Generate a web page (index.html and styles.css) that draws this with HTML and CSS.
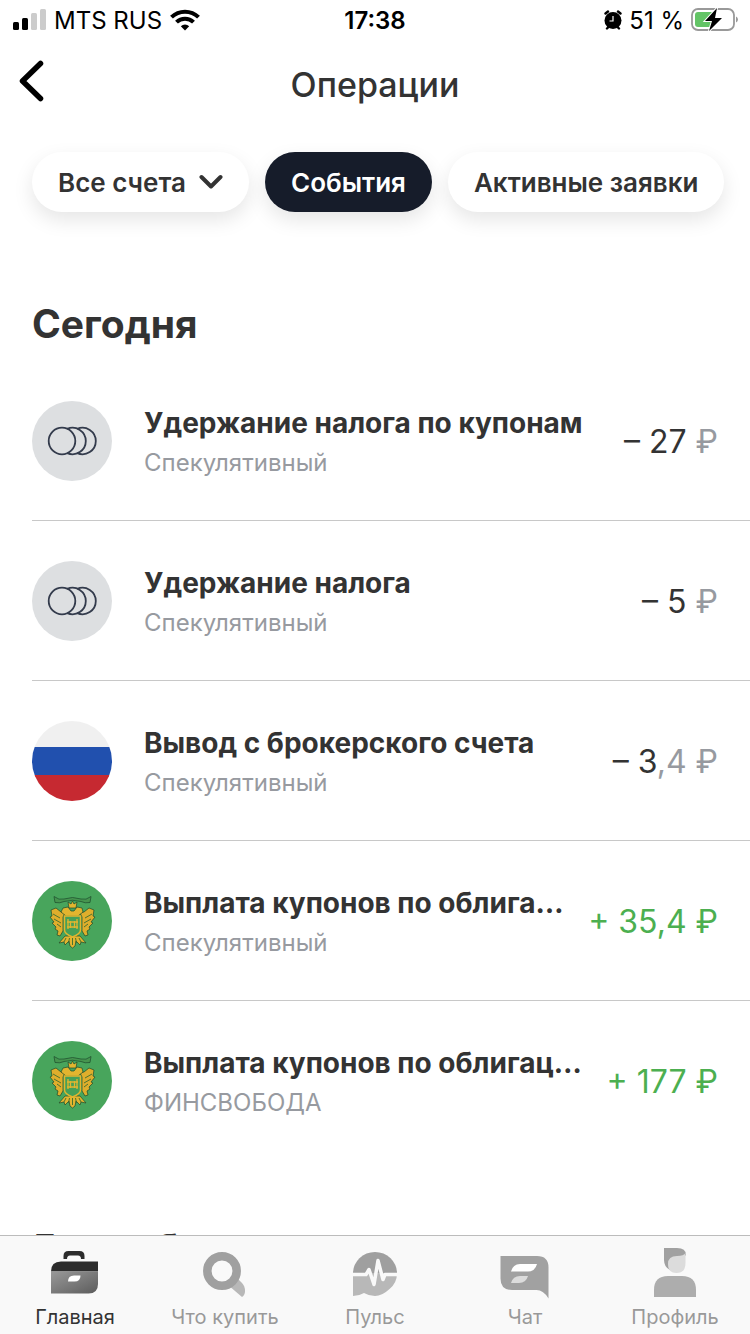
FILE: index.html
```html
<!DOCTYPE html>
<html lang="ru">
<head>
    <meta charset="UTF-8">
    <meta name="viewport" content="width=device-width, initial-scale=1.0">
    <title>Операции</title>
    <link rel="stylesheet" href="styles.css">
</head>
<body>
    <!-- Shared symbols -->
    <svg class="symbols" aria-hidden="true">
        <symbol id="coins" viewBox="0 0 80 80">
            <g fill="none" stroke="#333b4c" stroke-width="1.8">
                <circle cx="30" cy="40" r="13.300"/>
                <path d="M35.200 27.800A13.300 13.300 0 1 1 35.200 52.200"/>
                <path d="M45.200 27.800A13.300 13.300 0 1 1 45.200 52.200"/>
            </g>
        </symbol>
        <symbol id="eagle" viewBox="0 0 80 80">
            <g stroke="#1d4a2c" stroke-width=".7" stroke-linejoin="round">
                <path d="M24 27l5 4 4 1-2 4v14l-3 5-3-1 1-4-3-2 1-2-4-4 2-1-4-5 2-1-1-6z" fill="#dfae2c"/>
                <path d="M57 27l-5 4-4 1 2 4v14l3 5 3-1-1-4 3-2-1-2 4-4-2-1 4-5-2-1 1-6z" fill="#dfae2c"/>
                <path d="M33 55l-6 7 5-1 1 3 4-4 1 5 2.500 2 2.500-2 1-5 4 4 1-3 5 1-6-7z" fill="#e2b52f"/>
                <path d="M31 27l5-1 3 4h3l3-4 5 1 1 4-5 4H34l-5-4z" fill="#e2b52f"/>
                <path d="M37 27l-1-6 3 2 1.500-3 1.500 3 3-2-1 6z" fill="#e2b52f"/>
                <path d="M22 15.500q5 4 10 2.500 8.500-3 17 0 5 1.500 10-2.500l-1 6q-5 1-9-1-8.500-2.500-17 0-4 2-9 1z" fill="#46954f"/>
                <path d="M32.500 35h16v14q0 4-8 7-8-3-8-7z" fill="#45a058" stroke="#e2b52f" stroke-width="1.500"/>
            </g>
            <path d="M36 38v10M38.500 40v7M42.500 40v7M45 38v10M35 41h11M35 46h11" fill="none" stroke="#e2b52f" stroke-width="1.300"/>
            <path d="M21 33l7 4M22 38l7 4M25 43l4 3M60 33l-7 4M59 38l-7 4M56 43l-4 3M34 57l-2 4M37.500 57l-1 5M40.500 57v7M43.500 57l1 5M47 57l2 4" fill="none" stroke="#3b6c30" stroke-width=".9"/>
        </symbol>
    </svg>

    <div class="status-bar">
        <div class="status-left">
            <svg width="34" height="22" viewBox="0 0 34 22">
                <rect x="1" y="13" width="6" height="8" rx="1.5"/>
                <rect x="10" y="9" width="6" height="12" rx="1.5"/>
                <rect x="19" y="4" width="6" height="17" rx="1.5" fill="#ccc"/>
                <rect x="28" y="0" width="6" height="21" rx="1.5" fill="#ccc"/>
            </svg>
            <span>MTS RUS</span>
            <svg width="30" height="22" viewBox="0 0 30 22">
                <g fill="none" stroke="#000" stroke-width="4">
                    <path d="M1.5 8.2a19.2 19.2 0 0 1 27 0"/>
                    <path d="M6.5 13.2a12 12 0 0 1 17 0"/>
                </g>
                <path d="M10.8 17.2a6.3 6.3 0 0 1 8.4 0L15 21.5z"/>
            </svg>
        </div>
        <span class="status-time">17:38</span>
        <div class="status-right">
            <svg width="20" height="20" viewBox="0 0 20 20">
                <circle cx="10" cy="10.500" r="8.500"/>
                <path d="M2.500 3.500L5 1.500M17.500 3.500L15 1.500M4 18.500l2-2M16 18.500l-2-2" stroke="#000" stroke-width="2.400" stroke-linecap="round"/>
                <path d="M10 6v5H6.500" fill="none" stroke="#fff" stroke-width="1.200"/>
            </svg>
            <span>51 %</span>
            <svg width="48" height="26" viewBox="0 0 48 26">
                <rect x="2" y="2" width="42" height="21" rx="6" fill="#fff" stroke="#999" stroke-width="1.800"/>
                <path d="M8 5h14v15H8q-3 0-3-3V8q0-3 3-3z" fill="#63c466"/>
                <path d="M46 9.500q2 1 2 3t-2 3z" fill="#999"/>
                <path d="M27 1L15 14h7l-3 10 13-13h-7z" stroke="#fff" stroke-width="2" paint-order="stroke"/>
            </svg>
        </div>
    </div>

    <header class="header">
        <button class="back" type="button" aria-label="Назад">
            <svg width="26" height="42" viewBox="0 0 26 42">
                <path d="M22.500 3.500L4.500 21l18 17.500" fill="none" stroke="#000" stroke-width="5.500" stroke-linecap="round" stroke-linejoin="round"/>
            </svg>
        </button>
        <h1>Операции</h1>
    </header>

    <div class="filters">
        <button class="pill" type="button">Все счета
            <svg width="24" height="16" viewBox="0 0 24 16">
                <path d="M2.500 3L12 12.500 21.500 3" fill="none" stroke="#333" stroke-width="4" stroke-linecap="round" stroke-linejoin="round"/>
            </svg>
        </button>
        <button class="pill active" type="button">События</button>
        <button class="pill" type="button">Активные заявки</button>
    </div>

    <main class="feed">
        <section>
            <h2>Сегодня</h2>
            <ul class="operations">
                <li class="operation">
                    <svg class="logo tax"><use href="#coins"/></svg>
                    <div class="info">
                        <h3>Удержание налога по купонам</h3>
                        <p>Спекулятивный</p>
                    </div>
                    <span class="amount">– 27 <span class="muted">₽</span></span>
                </li>
                <li class="operation">
                    <svg class="logo tax"><use href="#coins"/></svg>
                    <div class="info">
                        <h3>Удержание налога</h3>
                        <p>Спекулятивный</p>
                    </div>
                    <span class="amount">– 5 <span class="muted">₽</span></span>
                </li>
                <li class="operation">
                    <div class="logo flag"></div>
                    <div class="info">
                        <h3>Вывод с брокерского счета</h3>
                        <p>Спекулятивный</p>
                    </div>
                    <span class="amount">– 3<span class="muted">,4 ₽</span></span>
                </li>
                <li class="operation">
                    <svg class="logo bond"><use href="#eagle"/></svg>
                    <div class="info">
                        <h3>Выплата купонов по облигациям</h3>
                        <p>Спекулятивный</p>
                    </div>
                    <span class="amount income">+ 35,4 ₽</span>
                </li>
                <li class="operation">
                    <svg class="logo bond"><use href="#eagle"/></svg>
                    <div class="info">
                        <h3>Выплата купонов по облигациям</h3>
                        <p>ФИНСВОБОДА</p>
                    </div>
                    <span class="amount income">+ 177 ₽</span>
                </li>
            </ul>
        </section>
        <section>
            <h2>5 октября</h2>
        </section>
    </main>

    <nav class="tabs">
        <a href="#home" class="current">
            <svg width="50" height="50" viewBox="0 0 50 50">
                <defs>
                    <linearGradient id="case" x1="0" y1="0" x2="1" y2="1">
                        <stop offset="0" stop-color="#999"/>
                        <stop offset="1" stop-color="#5c5c5c"/>
                    </linearGradient>
                </defs>
                <path d="M13.500 11V8q0-5 5-5h11q5 0 5 5v3H31q0-3.500-3-3.500h-8q-3 0-3 3.500z" fill="#2c2c2c"/>
                <path d="M1 23.500q0-10 10-10h37v10z" fill="#2c2c2c"/>
                <path d="M1 23.500h47v12.500q0 9.500-9.500 9.500H1z" fill="url(#case)"/>
                <path d="M18 33.500q0-6 6-6h6.500q0 6-6 6z" fill="#fff"/>
            </svg>
            <span>Главная</span>
        </a>
        <a href="#buy">
            <svg width="50" height="50" viewBox="0 0 50 50">
                <path d="M28 37l8-8 6 6q3 3 3 8 0 4-3 6z" fill="#b8b8b8"/>
                <circle cx="22" cy="23" r="14.700" fill="none" stroke="#a0a0a0" stroke-width="8.500"/>
            </svg>
            <span>Что купить</span>
        </a>
        <a href="#pulse">
            <svg width="50" height="50" viewBox="0 0 50 50">
                <path d="M3 25a22 21 0 0 1 44 0z" fill="#9f9f9f"/>
                <path d="M3 25h44q0 10-7.500 16Q32 48 25 48q-6 0-11-3-5 3-11 3z" fill="#b8b8b8"/>
                <path d="M2 26.500h14l3-5 5 15 4-24 5 19 2-5h13" fill="none" stroke="#f9f9f9" stroke-width="3.500" stroke-linejoin="round"/>
            </svg>
            <span>Пульс</span>
        </a>
        <a href="#chat">
            <svg width="50" height="50" viewBox="0 0 50 50">
                <path d="M.500 8H37q11.500 0 11.500 11.500V50.500q-5-8.500-12-8.500H12Q.500 42 .500 30.500z" fill="#a1a1a1"/>
                <path d="M11 23.500q2-7.500 9-7.500h17q-2 7.500-9 7.500z" fill="#fff"/>
                <path d="M11 35q2-7 9-7h8q-2 7-9 7z" fill="#dcdcdc"/>
            </svg>
            <span>Чат</span>
        </a>
        <a href="#profile">
            <svg width="50" height="50" viewBox="0 0 50 50">
                <path d="M14 0h13q9 0 9 7L20 22q-6-3-6-10z" fill="#a1a1a1"/>
                <path d="M18 16q0-8 9-8 7 0 8.500-3v10q0 10-9 10-8.500 0-8.500-9z" fill="#dcdcdc"/>
                <path d="M4 49V42q0-14 14-14h14q14 0 14 14v7z" fill="#adadad"/>
            </svg>
            <span>Профиль</span>
        </a>
    </nav>
</body>
</html>
```
FILE: styles.css
```css
* {
    margin: 0;
    padding: 0;
    box-sizing: border-box;
}

body {
    display: flex;
    flex-direction: column;
    height: 100vh;
    overflow: hidden;
    font-family: Inter, "Liberation Sans", sans-serif;
    color: #333;
    background: #fff;
}

button {
    border: none;
    background: none;
    font-family: inherit;
    color: inherit;
    cursor: pointer;
}

.symbols {
    display: none;
}

/* Status bar */
.status-bar {
    display: grid;
    grid-template-columns: 1fr auto 1fr;
    align-items: center;
    height: 40px;
    padding: 0 12px;
    font-size: 24px;
    color: #000;
}

.status-left,
.status-right {
    display: flex;
    align-items: center;
    gap: 8px;
}

.status-right {
    justify-content: flex-end;
    gap: 6px;
}

.status-time {
    font-weight: 600;
}

/* Header */
.header {
    display: grid;
    grid-template-columns: 1fr auto 1fr;
    align-items: center;
    height: 88px;
    padding: 0 18px;
}

.header h1 {
    font-size: 34px;
    font-weight: 500;
}

.back {
    display: flex;
    align-items: flex-start;
    justify-self: start;
    height: 48px;
}

/* Filters */
.filters {
    display: flex;
    gap: 16px;
    padding: 24px 24px 24px 32px;
}

.pill {
    display: flex;
    align-items: center;
    gap: 13px;
    height: 60px;
    padding: 0 26px;
    border-radius: 30px;
    background: #fff;
    box-shadow: 0 8px 20px rgba(0, 0, 0, 0.1);
    font-size: 26px;
    font-weight: 600;
    white-space: nowrap;
}

.pill.active {
    background: #161c2a;
    color: #fff;
}

/* Operations */
.feed {
    flex: 1;
    min-height: 0;
    overflow-y: auto;
    scrollbar-width: none;
}

.feed section {
    padding: 64px 0 0 32px;
}

.feed h2 {
    margin-bottom: 13px;
    font-size: 39px;
    line-height: 48px;
    font-weight: 700;
}

.operations {
    list-style: none;
}

.operation {
    display: flex;
    align-items: center;
    height: 160px;
    padding-right: 32px;
    border-bottom: 1px solid #c8c8c8;
}

.operation:last-child {
    border-bottom-color: transparent;
}

.logo {
    flex: none;
    width: 80px;
    height: 80px;
    margin-right: 32px;
    border-radius: 50%;
}

.tax {
    background: #dddfe1;
}

.flag {
    background: linear-gradient(#f0f0f0 33%, #2150ae 33% 67%, #c62931 67%);
}

.bond {
    background: #48a55c;
}

.info {
    flex: 1;
    min-width: 0;
    margin-right: 20px;
    padding-top: 4px;
}

.info h3 {
    overflow: hidden;
    font-size: 28px;
    line-height: 40px;
    font-weight: 700;
    white-space: nowrap;
    text-overflow: ellipsis;
}

.info p {
    font-size: 24px;
    line-height: 40px;
    color: #979aa0;
}

.amount {
    padding-top: 2px;
    font-size: 32px;
    white-space: nowrap;
}

.muted {
    color: #979aa0;
}

.income {
    color: #4caf50;
}

/* Tab bar */
.tabs {
    display: grid;
    grid-template-columns: repeat(5, 1fr);
    height: 99px;
    padding-top: 12px;
    border-top: 1px solid #bcbcbc;
    background: #f9f9f9;
}

.tabs a {
    display: flex;
    flex-direction: column;
    align-items: center;
    gap: 7px;
    font-size: 20px;
    line-height: 24px;
    color: #999;
    text-decoration: none;
}

.tabs svg {
    overflow: visible;
}

.tabs .current {
    color: #333;
}
```
